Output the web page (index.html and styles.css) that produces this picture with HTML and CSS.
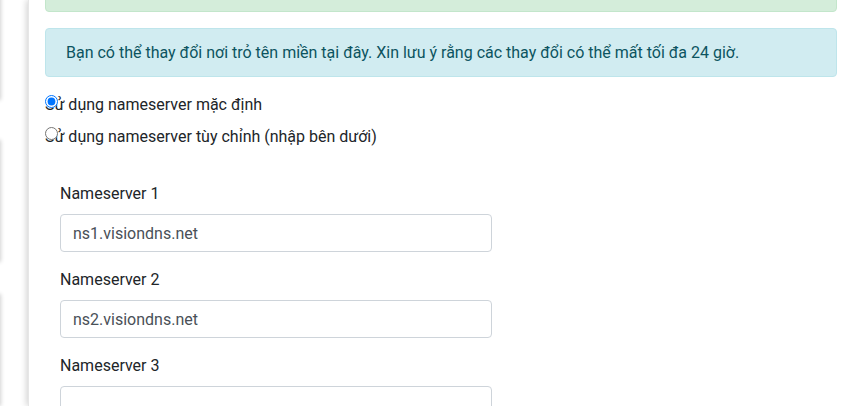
FILE: index.html
```html
<!DOCTYPE html>
<html lang="vi">
<head>
<meta charset="utf-8">
<link rel="stylesheet" href="styles.css">
</head>
<body>
<div class="page">
  <aside class="sidebar">
    <div class="side-card side-card-a"></div>
    <div class="side-card side-card-b"></div>
    <div class="side-card side-card-c"></div>
  </aside>
  <main class="panel">
    <div class="alert alert-success"></div>
    <div class="alert alert-info">Bạn có thể thay đổi nơi trỏ tên miền tại đây. Xin lưu ý rằng các thay đổi có thể mất tối đa 24 giờ.</div>
    <div class="form-check">
      <input class="form-check-input" type="radio" name="ns" id="ns-default" checked>
      <label class="form-check-label" for="ns-default">Sử dụng nameserver mặc định</label>
    </div>
    <div class="form-check">
      <input class="form-check-input" type="radio" name="ns" id="ns-custom">
      <label class="form-check-label" for="ns-custom">Sử dụng nameserver tùy chỉnh (nhập bên dưới)</label>
    </div>
    <div class="ns-fields">
      <div class="form-group">
        <label class="field-label" for="ns1">Nameserver 1</label>
        <input class="form-control" type="text" id="ns1" value="ns1.visiondns.net">
      </div>
      <div class="form-group">
        <label class="field-label" for="ns2">Nameserver 2</label>
        <input class="form-control" type="text" id="ns2" value="ns2.visiondns.net">
      </div>
      <div class="form-group">
        <label class="field-label" for="ns3">Nameserver 3</label>
        <input class="form-control" type="text" id="ns3" value="">
      </div>
    </div>
  </main>
</div>
</body>
</html>
```
FILE: styles.css
```css
* { box-sizing: border-box; }
html, body { margin: 0; padding: 0; background: #fff; }
body {
  font-family: Roboto, "Liberation Sans", Arial, sans-serif;
  font-size: 16px;
  line-height: 1.5;
  color: #212529;
  overflow: hidden;
  height: 406px;
}
.page { display: flex; height: 406px; }
.sidebar {
  width: 28px;
  flex: none;
  display: flex;
  flex-direction: column;
  gap: 40px;
  overflow: hidden;
}
.side-card {
  margin-left: -40px;
  width: 40px;
  background: #fff;
  box-shadow: 1px 0 4px rgba(0,0,0,0.18);
}
.side-card-a { height: 118px; margin-top: -10px; }
.side-card-b { height: 130px; }
.side-card-c { height: 120px; margin-top: -8px; }
.panel {
  flex: 1;
  background: #fff;
  box-shadow: -2px 0 6px rgba(0,0,0,0.16);
  border-left: 1px solid #e6e6e6;
  padding: 0 13px 0 16px;
  position: relative;
  z-index: 1;
}
.alert {
  border: 1px solid transparent;
  border-radius: 4px;
  padding: 12px 20px;
  line-height: 23px;
  margin-bottom: 16px;
}
.alert-success {
  background: #d4edda;
  border-color: #c3e6cb;
  height: 49px;
  margin-top: -37px;
}
.alert-info {
  background: #d1ecf1;
  border-color: #bee5eb;
  color: #0c5460;
}
.form-check {
  position: relative;
  line-height: 24px;
  margin-bottom: 8px;
}
.form-check-input {
  position: absolute;
  left: 0;
  top: 2px;
  margin: 0;
  width: 13px;
  height: 13px;
}
.form-check-label { display: inline-block; }
.ns-fields {
  padding: 25px 15px 0 15px;
}
.form-group { margin-bottom: 16px; }
.field-label {
  display: block;
  line-height: 24px;
  margin-bottom: 8px;
}
.form-control {
  display: block;
  width: 432px;
  height: 38px;
  padding: 6px 12px;
  font-family: inherit;
  font-size: 16px;
  line-height: 1.5;
  color: #495057;
  background: #fff;
  border: 1px solid #ced4da;
  border-radius: 4px;
  margin: 0;
}
```
